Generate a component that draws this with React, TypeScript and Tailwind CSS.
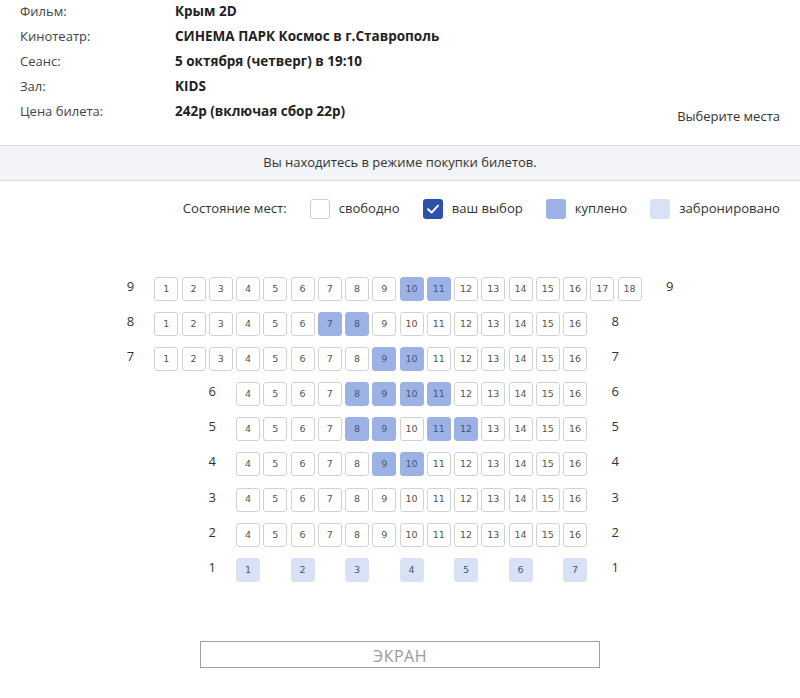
type SeatState = "free" | "sold" | "reserved";

type Row = {
  num: number;
  skip: number; // empty columns before the row's first seat
  seats: (number | null)[];
  sold?: number[];
  reserved?: boolean;
};

const range = (a: number, b: number) => Array.from({ length: b - a + 1 }, (_, i) => a + i);

const rows: Row[] = [
  { num: 9, skip: 0, seats: range(1, 18), sold: [10, 11] },
  { num: 8, skip: 0, seats: range(1, 16), sold: [7, 8] },
  { num: 7, skip: 0, seats: range(1, 16), sold: [9, 10] },
  { num: 6, skip: 3, seats: range(4, 16), sold: [8, 9, 10, 11] },
  { num: 5, skip: 3, seats: range(4, 16), sold: [8, 9, 11, 12] },
  { num: 4, skip: 3, seats: range(4, 16), sold: [9, 10] },
  { num: 3, skip: 3, seats: range(4, 16) },
  { num: 2, skip: 3, seats: range(4, 16) },
  { num: 1, skip: 3, seats: [1, null, 2, null, 3, null, 4, null, 5, null, 6, null, 7], reserved: true },
];

const info = [
  ["Фильм:", "Крым 2D"],
  ["Кинотеатр:", "СИНЕМА ПАРК Космос в г.Ставрополь"],
  ["Сеанс:", "5 октября (четверг) в 19:10"],
  ["Зал:", "KIDS"],
  ["Цена билета:", "242р (включая сбор 22р)"],
];

const Seat = ({ n, state }: { n: number; state: SeatState }) => {
  const look =
    state === "sold"
      ? "bg-[#9db2e4] border-[#9db2e4] text-[#44557e]"
      : state === "reserved"
        ? "bg-[#d9e2f5] border-[#d9e2f5] text-[#44557e]"
        : "bg-white border-[#d2d2d2] text-[#555]";
  return (
    <div
      className={`w-[24px] h-[24px] shrink-0 rounded-[3px] border flex items-center justify-center text-[9.5px] font-['DejaVu_Sans',sans-serif] ${look}`}
    >
      {n}
    </div>
  );
};

const RowLabel = ({ n }: { n: number }) => (
  <div className="w-[24px] shrink-0 self-start text-center text-[13px] leading-[18px] text-[#333]">{n}</div>
);

const SeatRow = ({ row }: { row: Row }) => (
  <div className="flex items-center h-[24px]">
    {range(1, row.skip).map((i) => (
      <div key={i} className="w-[24px] mr-[3.25px] shrink-0" />
    ))}
    <RowLabel n={row.num} />
    <div className="flex gap-[3.25px] ml-[12px] mr-[16px]">
      {row.seats.map((s, i) =>
        s === null ? (
          <div key={`e${i}`} className="w-[24px] shrink-0" />
        ) : (
          <Seat
            key={i}
            n={s}
            state={row.reserved ? "reserved" : row.sold?.includes(s) ? "sold" : "free"}
          />
        )
      )}
    </div>
    <RowLabel n={row.num} />
  </div>
);

const Legend = () => (
  <div className="flex justify-end items-center gap-[23px] pr-5 pt-[18px] text-[13.1px] text-[#333]">
    <span>Состояние мест:</span>
    <div className="flex items-center gap-[9px]">
      <div className="w-[20px] h-[20px] rounded-[3px] border border-[#cfcfcf] bg-white" />
      <span>свободно</span>
    </div>
    <div className="flex items-center gap-[9px]">
      <div className="w-[20px] h-[20px] rounded-[3px] bg-[#2c51a8] flex items-center justify-center">
        <svg width="14" height="14" viewBox="0 0 14 14" fill="none">
          <path d="M2 7.2 L5.6 10.6 L12 3.6" stroke="white" strokeWidth="2" strokeLinecap="round" strokeLinejoin="round" />
        </svg>
      </div>
      <span>ваш выбор</span>
    </div>
    <div className="flex items-center gap-[9px]">
      <div className="w-[20px] h-[20px] rounded-[3px] bg-[#9db2e4]" />
      <span>куплено</span>
    </div>
    <div className="flex items-center gap-[9px]">
      <div className="w-[20px] h-[20px] rounded-[3px] bg-[#d9e2f5]" />
      <span>забронировано</span>
    </div>
  </div>
);

export default function App() {
  return (
    <div className="w-[800px] h-[698px] bg-white font-['Open_Sans',sans-serif] overflow-hidden">
      <div className="flex justify-between items-end px-5 pb-[20px]">
        <div>
          {info.map(([k, v]) => (
            <div key={k} className="flex h-[25px] items-center pb-[2px]">
              <div className="w-[155px] text-[13px] text-[#444]">{k}</div>
              <div className="text-[13.5px] font-bold text-[#222]">{v}</div>
            </div>
          ))}
        </div>
        <div className="text-[13px] leading-[25px] text-[#333] mb-[-4px]">Выберите места</div>
      </div>

      <div className="h-[36px] border-y border-[#d8d8dc] bg-[#f3f4f7] flex items-center justify-center text-[13px] text-[#333]">
        Вы находитесь в режиме покупки билетов.
      </div>

      <Legend />

      <div className="w-fit mx-auto mt-[58px] flex flex-col gap-[11.1px]">
        {rows.map((r) => (
          <SeatRow key={r.num} row={r} />
        ))}
      </div>

      <div className="w-[400px] h-[27px] mx-auto mt-[59px] border border-[#a0a0a0] flex items-center justify-center pt-[3px] text-[16px] text-[#9a9a9a] tracking-[0.5px]">
        ЭКРАН
      </div>
    </div>
  );
}
